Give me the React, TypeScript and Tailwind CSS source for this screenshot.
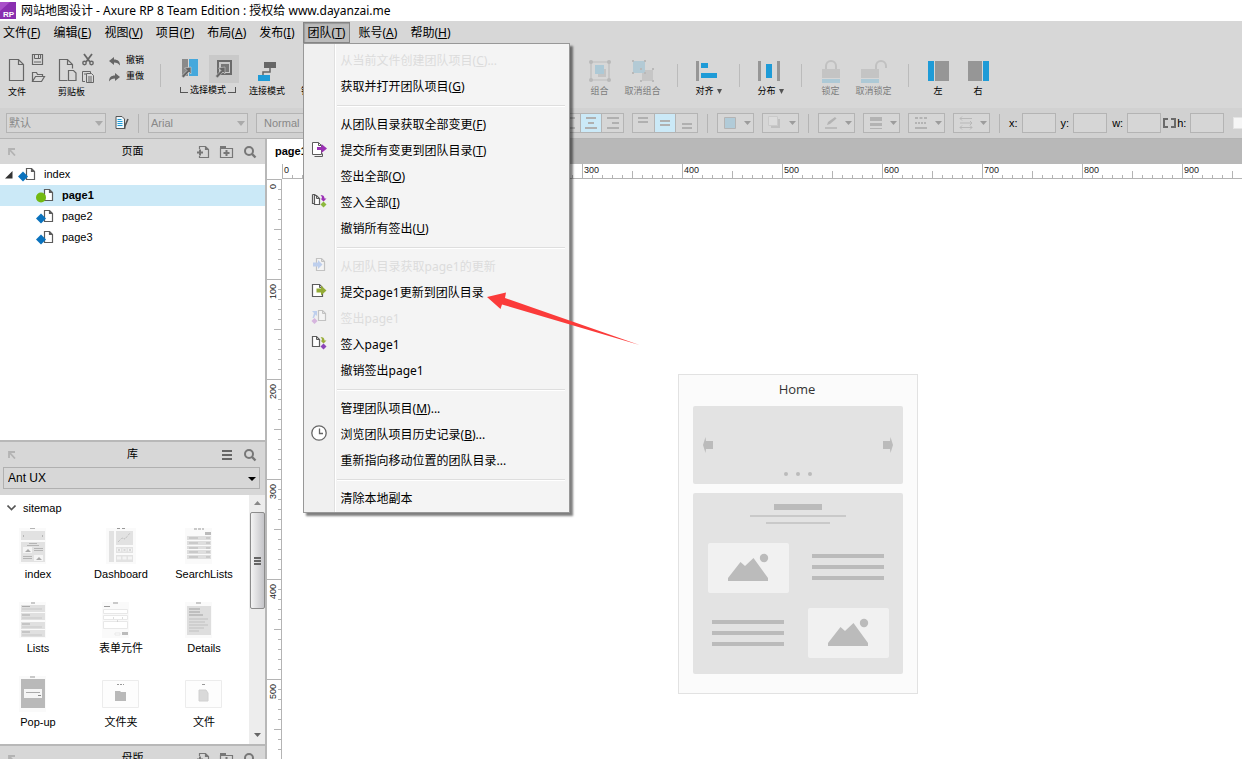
import React, { useEffect, useState } from "react";

type Kids = { children?: React.ReactNode };

const UI = "font-['Noto_Sans','Noto_Sans_CJK_SC',sans-serif]";
const ARIAL = "font-['Liberation_Sans','Noto_Sans_CJK_SC',sans-serif]";

/* ---------- menu bar ---------- */

function Label({ text, hotkey, tail }: { text: string; hotkey?: string; tail?: string }) {
  return (
    <span className="whitespace-nowrap">
      {text}
      {hotkey && (
        <>
          (<u className="underline-offset-1">{hotkey}</u>)
        </>
      )}
      {tail}
    </span>
  );
}

const menusBefore = [
  ["文件", "F"],
  ["编辑", "E"],
  ["视图", "V"],
  ["项目", "P"],
  ["布局", "A"],
  ["发布", "I"],
];
const menusAfter = [
  ["账号", "A"],
  ["帮助", "H"],
];

type Entry = {
  text: string;
  hotkey?: string;
  tail?: string;
  disabled?: boolean;
  icon?: React.ReactNode;
};

const Page = ({ x, w = 9, h = 13, y = 1 }: { x: number; w?: number; h?: number; y?: number }) => (
  <>
    <path
      d={`M${x + 0.5} ${y + 0.5}h${w - 4}l3 3v${h - 4}h-${w - 1}z`}
      fill="#fff"
      stroke="#5c5c5c"
      strokeWidth="1.2"
    />
    <path d={`M${x + w - 3.5} ${y + 0.5}v3h3`} fill="none" stroke="#5c5c5c" />
  </>
);

const SubmitIcon = ({ color }: { color: string }) => (
  <svg width="16" height="16" viewBox="0 0 16 16">
    <Page x={1} w={11} h={13} />
    <path d="M5.500 5.500h4.500V2.500l5.500 5-5.500 5v-3H5.500z" fill={color} />
  </svg>
);

const SubmitAllIcon = () => (
  <svg width="16" height="16" viewBox="0 0 16 16">
    <path d="M3.500 15.500h8v-3" fill="none" stroke="#5c5c5c" />
    <path d="M1.500 13.500v-12h6l3 3v9z" fill="#fff" stroke="#5c5c5c" />
    <path d="M7.500 1.500v3h3" fill="none" stroke="#5c5c5c" />
    <path d="M6 6h4.500V3l5.500 4.500-5.500 4.500V9H6z" fill="#9b30b5" />
  </svg>
);

const CheckInIcon = ({ all }: { all?: boolean }) => (
  <svg width="16" height="16" viewBox="0 0 16 16">
    {all ? (
      <>
        <path d="M1.500 1.500h3M1.500 1.500v9h2" fill="none" stroke="#5c5c5c" strokeWidth="1.200" />
        <Page x={3} w={6} h={10} y={2} />
      </>
    ) : (
      <Page x={1} w={8} h={11} />
    )}
    <path
      d="M9.500 2c2.500 0 4 1 4 3.500h2l-3 3-3-3h1.500C11 4 10.500 3 9.500 2z"
      fill={all ? "#9b30b5" : "#9aae3a"}
    />
    <path d="M12.500 8.500l3 3-3 3-3-3z" fill={all ? "#8cb83c" : "#8b45b8"} />
  </svg>
);

const FetchIcon = () => (
  <svg width="16" height="16" viewBox="0 0 16 16" opacity="0.300">
    <Page x={5} w={9} h={13} />
    <path d="M2 5.500h5V3l4.500 4.500L7 12V9.500H2z" fill="#4f86e8" />
  </svg>
);

const CheckOutIcon = () => (
  <svg width="16" height="16" viewBox="0 0 16 16" opacity="0.300">
    <Page x={7} w={8} h={11} />
    <path d="M1 2h5v5L4.500 5.500 3 9H1.500L3 4z" fill="#4f86e8" />
    <path d="M3.500 9l3 3-3 3-3-3z" fill="#9b30b5" />
  </svg>
);

const ClockIcon = () => (
  <svg width="16" height="16" viewBox="0 0 16 16">
    <circle cx="8" cy="8" r="7.200" fill="#fff" stroke="#666" strokeWidth="1.300" />
    <path d="M8.500 3.500v5H12" fill="none" stroke="#666" strokeWidth="1.300" />
  </svg>
);

const sections: Entry[][] = [
  [
    { text: "从当前文件创建团队项目", hotkey: "C", tail: "...", disabled: true },
    { text: "获取并打开团队项目", hotkey: "G" },
  ],
  [
    { text: "从团队目录获取全部变更", hotkey: "F" },
    { text: "提交所有变更到团队目录", hotkey: "T", icon: <SubmitAllIcon /> },
    { text: "签出全部", hotkey: "O" },
    { text: "签入全部", hotkey: "I", icon: <CheckInIcon all /> },
    { text: "撤销所有签出", hotkey: "U" },
  ],
  [
    { text: "从团队目录获取page1的更新", disabled: true, icon: <FetchIcon /> },
    { text: "提交page1更新到团队目录", icon: <SubmitIcon color="#93ab35" /> },
    { text: "签出page1", disabled: true, icon: <CheckOutIcon /> },
    { text: "签入page1", icon: <CheckInIcon /> },
    { text: "撤销签出page1" },
  ],
  [
    { text: "管理团队项目", hotkey: "M", tail: "..." },
    { text: "浏览团队项目历史记录", hotkey: "B", tail: "...", icon: <ClockIcon /> },
    { text: "重新指向移动位置的团队目录", tail: "..." },
  ],
  [{ text: "清除本地副本" }],
];

function TeamMenu() {
  return (
    <div className="absolute top-full left-0 z-20 w-[267px] border border-[#989898] bg-[linear-gradient(to_right,#f0f0f0_30px,#e0e0e0_30px,#e0e0e0_31px,#fff_31px,#fff_32px,#f4f4f4_32px)] pt-1 shadow-[3px_3px_2px_rgba(0,0,0,0.5)]">
      {sections.map((section, i) => (
        <React.Fragment key={i}>
          {i > 0 && (
            <div className="flex h-3 items-center pr-1 pl-[33px]">
              <hr className="h-[2px] w-full border-0 border-t border-[#dedede] bg-white" />
            </div>
          )}
          {section.map((e) => (
            <button
              key={e.text}
              disabled={e.disabled}
              className="flex h-[26px] w-full items-center text-left text-black disabled:text-[#dcdcdc]"
            >
              <span className="flex w-[37px] shrink-0 pb-1 pl-[7px]">{e.icon}</span>
              <Label text={e.text} hotkey={e.hotkey} tail={e.tail} />
            </button>
          ))}
        </React.Fragment>
      ))}
      <svg
        className="pointer-events-none absolute top-[248px] left-[183px]"
        width="154"
        height="54"
        viewBox="0 0 154 54"
      >
        <path d="M0 5L19 0.500 18 6 152.500 53 15 12.500 13.500 17z" fill="#fb3b3a" />
      </svg>
    </div>
  );
}

function MenuBar() {
  const item = "h-[21px] border border-transparent px-1";
  return (
    <nav className="-ml-0.5 flex h-[23px] items-start gap-[3px] pt-px pr-2 text-[12px]">
      {menusBefore.map(([t, k]) => (
        <button key={t} className={item}>
          <Label text={t} hotkey={k} />
        </button>
      ))}
      <div className="relative">
        <button className="h-[21px] border border-[#858585] bg-[#bcbcbc] px-1 shadow-[inset_1px_1px_1px_#999]">
          <Label text="团队" hotkey="T" />
        </button>
        <TeamMenu />
      </div>
      {menusAfter.map(([t, k]) => (
        <button key={t} className={item}>
          <Label text={t} hotkey={k} />
        </button>
      ))}
    </nav>
  );
}

/* ---------- toolbar ---------- */

const Sep = () => <div className="mt-5 h-[23px] w-px shrink-0 bg-[#bbb]" />;

function Tool({
  label,
  children,
  off,
  menu,
  w,
}: Kids & { label: string; off?: boolean; menu?: boolean; w: string }) {
  return (
    <button
      disabled={off}
      className={`${w} flex shrink-0 flex-col items-center pt-[14px] text-[9px] leading-[14px] whitespace-nowrap disabled:text-[#7c7c7c]`}
    >
      <span className="flex h-[26px] items-center">{children}</span>
      <span className="flex items-center gap-[3px]">
        {label}
        {menu && (
          <svg width="5" height="5" viewBox="0 0 5 5">
            <path d="M0 0h5L2.500 5z" fill="#555" />
          </svg>
        )}
      </span>
    </button>
  );
}

const G = "#666";

function Toolbar() {
  return (
    <div className="flex h-16 overflow-hidden pl-2">
      <div className="w-[50px] shrink-0 pt-2">
        <svg width="40" height="33" viewBox="0 0 40 33" fill="none" stroke={G}>
          <path d="M1.500 7.500h9l5 5v16h-14zM10.500 7.500v5h5" strokeWidth="1.200" />
          <path d="M24.500 2.500h10v10h-10z" strokeWidth="1.200" />
          <path d="M26.500 2.500v4h6v-4M26 10h7M30.500 3v3" />
          <path d="M24.500 29.500v-9h4l1 2h5v2M24.500 29.500l3-5h9l-3 5z" strokeWidth="1.200" />
        </svg>
        <button className="block text-[9px] leading-[14px]">文件</button>
      </div>
      <div className="w-[51px] shrink-0 pt-2">
        <svg width="40" height="33" viewBox="0 0 40 33" fill="none" stroke={G}>
          <path d="M9.500 28.500h-8v-21h8l5 5v4M9.500 7.500v5h5" strokeWidth="1.200" />
          <path d="M10.500 18.500h5l2.500 2.500v7.500h-7.500z" strokeWidth="1.200" fill="#d7d7d7" />
          <path d="M26 2l6 8M34 2l-6 8" strokeWidth="1.800" />
          <circle cx="26.500" cy="11" r="1.700" strokeWidth="1.400" />
          <circle cx="33.500" cy="11" r="1.700" strokeWidth="1.400" />
          <path d="M27 29.500h-2.500v-10h8v2" />
          <path d="M28.500 21.500h5l2 2v7h-7zM30 25h4M30 27h4M30 29h4M26 22h2" />
        </svg>
        <button className="block text-[9px] leading-[14px]">剪贴板</button>
      </div>
      <div className="flex w-[51px] shrink-0 flex-col pt-[9px] text-[9px]">
        <button className="flex h-4 items-center gap-[6px]">
          <svg width="11" height="9" viewBox="0 0 11 9" fill={G}>
            <path d="M0 4l5-4v2.500c4 0 6 2 6 6C9.500 6.500 8 5.500 5 5.500V8z" />
          </svg>
          撤销
        </button>
        <button className="flex h-4 items-center gap-[6px]">
          <svg width="11" height="9" viewBox="0 0 11 9" fill={G}>
            <path d="M11 4L6 0v2.500c-4 0-6 2-6 6C1.500 6.500 3 5.500 6 5.500V8z" />
          </svg>
          重做
        </button>
      </div>
      <Sep />
      <div className="ml-[19px] w-14 shrink-0 pt-[11px]">
        <div className="flex h-7 items-center">
          <button aria-label="相交选择" className="w-[29px] shrink-0">
            <svg width="20" height="22" viewBox="0 0 20 22">
              <path d="M2 1h6v17H2z" fill="#8a8a8a" />
              <path d="M9 1h9v17H9z" fill="#45a8dc" />
              <path d="M11 9v7l-2-2-5.500 6-2-2L7 12.500 4.500 10z" fill="#666" stroke="#d7d7d7" strokeWidth="0.600" />
            </svg>
          </button>
          <button aria-label="包含选择" className="flex h-7 w-[30px] shrink-0 items-center justify-center bg-[#c9c9c9]">
            <svg width="20" height="22" viewBox="0 0 20 22">
              <path d="M4 3h13v13H4z" fill="none" stroke="#6b6b6b" strokeWidth="2" />
              <path d="M7 6h8v8H7z" fill="#777" />
              <path d="M11 9v7l-2-2-5.500 6-2-2L7 12.500 4.500 10z" fill="#666" stroke="#c9c9c9" strokeWidth="0.600" />
            </svg>
          </button>
        </div>
        <div className="flex items-center justify-between text-[9px] leading-[14px]">
          <span className="h-[6px] w-[8px] border-b border-l border-[#555]" />
          <span className="whitespace-nowrap">选择模式</span>
          <span className="h-[6px] w-[8px] border-r border-b border-[#555]" />
        </div>
      </div>
      <Tool label="连接模式" w="w-[62px]">
        <svg width="20" height="20" viewBox="0 0 20 20">
          <path d="M7 1h12v6H7z" fill="#666" />
          <path d="M13 7v4H6v3" fill="none" stroke="#666" strokeWidth="1.500" />
          <path d="M1 14h12v6H1z" fill="#1e9bd7" />
        </svg>
      </Tool>
      <Tool label="钢笔" w="w-[24px]">
        <span />
      </Tool>
      <div className="w-[256px] shrink-0" />
      <Tool label="组合" off w="w-[43px]">
        <svg width="22" height="22" viewBox="0 0 22 22">
          <path d="M2 2h18v18H2z" fill="none" stroke="#bdbdbd" strokeWidth="1.200" />
          <path d="M9 9h8v8H9z" fill="#c4c4c4" />
          <path d="M6 5h9v9H6z" fill="#adc9d6" />
          <g fill="#b9b9b9">
            <circle cx="2" cy="2" r="2" />
            <circle cx="20" cy="2" r="2" />
            <circle cx="2" cy="20" r="2" />
            <circle cx="20" cy="20" r="2" />
          </g>
        </svg>
      </Tool>
      <Tool label="取消组合" off w="w-[43px]">
        <svg width="22" height="22" viewBox="0 0 22 22">
          <path d="M10 10h11v11H10z" fill="#c6c6c6" />
          <path d="M1 1h12v12H1z" fill="#b3cad5" />
          <path
            d="M0 0h2v2H0zM12 0h2v2h-2zM0 12h2v2H0zM12 12h2v2h-2zM20 8h2v2h-2zM8 20h2v2H8zM20 20h2v2h-2zM8 8h2v2H8z"
            fill="#b9b9b9"
          />
        </svg>
      </Tool>
      <div className="w-[13px] shrink-0" />
      <Sep />
      <Tool label="对齐" menu w="w-[61px]">
        <svg width="26" height="22" viewBox="0 0 26 22">
          <path d="M0 1h3v20H0z" fill="#969696" />
          <path d="M5 3h7v5H5zM5 13h16v5H5z" fill="#1e9bd7" />
        </svg>
      </Tool>
      <Sep />
      <Tool label="分布" menu w="w-[61px]">
        <svg width="26" height="22" viewBox="0 0 26 22">
          <path d="M0 1h3v20H0zM19 1h3v20h-3z" fill="#969696" />
          <path d="M8 4h6v14H8z" fill="#1e9bd7" />
        </svg>
      </Tool>
      <Sep />
      <div className="w-[7px] shrink-0" />
      <Tool label="锁定" off w="w-[43px]">
        <svg width="18" height="24" viewBox="0 0 18 24">
          <path d="M4 10V7a5 5 0 0 1 10 0v3" fill="none" stroke="#c1c1c1" strokeWidth="2" />
          <path d="M0 10h18v9H0z" fill="#c4c4c4" />
          <path d="M0 20h18v4H0z" fill="#adc9d6" />
        </svg>
      </Tool>
      <Tool label="取消锁定" off w="w-[43px]">
        <svg width="26" height="24" viewBox="0 0 26 24">
          <path d="M15 10V7a5 5 0 0 1 10 0v2" fill="none" stroke="#c1c1c1" strokeWidth="2" />
          <path d="M0 10h18v9H0z" fill="#c4c4c4" />
          <path d="M0 20h18v4H0z" fill="#adc9d6" />
        </svg>
      </Tool>
      <div className="w-[13px] shrink-0" />
      <Sep />
      <div className="w-[9px] shrink-0" />
      <Tool label="左" w="w-10">
        <svg width="21" height="20" viewBox="0 0 21 20">
          <path d="M0 0h6v20H0z" fill="#1e9bd7" />
          <path d="M7 0h14v20H7z" fill="#969696" />
        </svg>
      </Tool>
      <Tool label="右" w="w-10">
        <svg width="21" height="20" viewBox="0 0 21 20">
          <path d="M15 0h6v20h-6z" fill="#1e9bd7" />
          <path d="M0 0h14v20H0z" fill="#969696" />
        </svg>
      </Tool>
    </div>
  );
}

/* ---------- format bar ---------- */

const BarSep = () => <div className="mx-[9px] h-[19px] w-px shrink-0 bg-[#b4b4b4]" />;

function FormatSelect({ label, value, pad }: { label: string; value: string; pad: string }) {
  return (
    <div className="relative w-[100px] shrink-0">
      <select
        aria-label={label}
        className={`block h-5 w-full appearance-none border border-[#b4b4b4] bg-[#d6d6d6] ${pad} text-[11px] leading-[18px] text-[#888] outline-none`}
      >
        <option>{value}</option>
      </select>
      <svg className="pointer-events-none absolute top-2 right-[3px]" width="8" height="5" viewBox="0 0 8 5">
        <path d="M0 0h8L4 5z" fill="#aaa" />
      </svg>
    </div>
  );
}

function Drop({ label, children }: Kids & { label: string }) {
  return (
    <button
      aria-label={label}
      className="flex h-5 w-[37px] shrink-0 items-center justify-between border border-[#b4b4b4] bg-[#d6d6d6] pr-[2px] pl-[5px]"
    >
      <svg width="14" height="14" viewBox="0 0 14 14">
        {children}
      </svg>
      <svg width="7" height="4" viewBox="0 0 7 4">
        <path d="M0 0h7L3.500 4z" fill="#9c9c9c" />
      </svg>
    </button>
  );
}

function Trio({ labels, paths }: { labels: string[]; paths: string[] }) {
  return (
    <div className="flex h-5 w-[66px] shrink-0 divide-x divide-[#b4b4b4] border border-[#b4b4b4]">
      {paths.map((d, i) => (
        <button
          key={d}
          aria-label={labels[i]}
          className={`flex flex-1 items-center justify-center ${i === 1 ? "bg-[#cbe9f7]" : "bg-[#d6d6d6]"}`}
        >
          <svg width="12" height="14" viewBox="0 0 12 14">
            <path d={d} stroke="#b0b0b0" strokeWidth="2" />
          </svg>
        </button>
      ))}
    </div>
  );
}

function Coord({ name }: { name: string }) {
  return (
    <label className="flex shrink-0 items-center gap-[4px] text-[11px]">
      {name}:
      <input className="h-5 w-[34px] border border-[#b4b4b4] bg-[#d6d6d6] px-1 outline-none" />
    </label>
  );
}

function FormatBar() {
  return (
    <div className="flex h-[30px] shrink-0 items-center overflow-hidden bg-[#d1d1d1] pl-[6px]">
      <FormatSelect label="样式" value="默认" pad="pl-[2px]" />
      <button aria-label="样式管理" className="ml-[9px] shrink-0">
        <svg width="14" height="14" viewBox="0 0 14 14">
          <path d="M1 .5h6l2.500 2.500v9.500H1z" fill="#eef8fd" stroke="#555" />
          <path d="M2.500 3.500h4M2.500 5.500h5M2.500 7.500h5M2.500 9.500h5" stroke="#1e9bd7" />
          <path d="M13 3l-3 7-.5 3" stroke="#555" strokeWidth="1.600" fill="none" />
        </svg>
      </button>
      <BarSep />
      <FormatSelect label="字体" value="Arial" pad="pl-[2px]" />
      <div className="w-2 shrink-0" />
      <FormatSelect label="字重" value="Normal" pad="pl-[7px]" />
      <div className="w-[202px] shrink-0" />
      <Trio
        labels={["左对齐", "居中", "右对齐"]}
        paths={["M0 2h12M0 7h7M0 12h12", "M1 2h10M3 7h6M0 12h12", "M0 2h12M5 7h7M0 12h12"]}
      />
      <div className="w-2 shrink-0" />
      <Trio
        labels={["顶端对齐", "垂直居中", "底端对齐"]}
        paths={["M1 2h10M1 6h10", "M1 5h10M1 9h10", "M1 8h10M1 12h10"]}
      />
      <BarSep />
      <Drop label="填充">
        <path d="M1.500 1.500h11v11h-11z" fill="#b1cbd8" stroke="#b4b4b4" />
      </Drop>
      <div className="w-2 shrink-0" />
      <Drop label="阴影">
        <path d="M3 3h9v9H3z" fill="#c0c0c0" />
        <path d="M.5 .5h9v9h-9z" fill="#dcdcdc" stroke="#cacaca" />
      </Drop>
      <BarSep />
      <Drop label="线条颜色">
        <path d="M3 9l1-3 7-5 1.500 1.500L6 8z" fill="#b3b3b3" />
        <path d="M1 11h12v2H1z" fill="#bcbcbc" />
      </Drop>
      <div className="w-2 shrink-0" />
      <Drop label="线宽">
        <path d="M1 1h12v4H1zM1 7h12v3H1zM1 12h12v1H1z" fill="#b3b3b3" />
      </Drop>
      <div className="w-2 shrink-0" />
      <Drop label="线型">
        <path d="M1 2h12" stroke="#b3b3b3" strokeWidth="2" strokeDasharray="3 1.500" />
        <path d="M1 7h12" stroke="#b3b3b3" strokeWidth="2" strokeDasharray="2 1" />
        <path d="M1 12h12" stroke="#b3b3b3" strokeWidth="2" />
      </Drop>
      <div className="w-2 shrink-0" />
      <Drop label="箭头">
        <path
          d="M1 2.500h12M1 7h12M1 11.500h12M3 .5l-2 2 2 2M11 5l2 2-2 2M3 9.500l-2 2 2 2M11 9.500l2 2-2 2"
          fill="none"
          stroke="#b8b8b8"
        />
      </Drop>
      <BarSep />
      <Coord name="x" />
      <div className="w-[5px] shrink-0" />
      <Coord name="y" />
      <div className="w-[5px] shrink-0" />
      <Coord name="w" />
      <svg className="ml-[2px] shrink-0" width="13" height="10" viewBox="0 0 13 10">
        <path d="M5 1H1v8h4M8 1h4v8H8" fill="none" stroke="#6a6a6a" strokeWidth="2" />
      </svg>
      <div className="w-px shrink-0" />
      <Coord name="h" />
      <input
        type="checkbox"
        aria-label="隐藏"
        className="ml-[9px] h-3 w-3 shrink-0 appearance-none border border-[#e4e4e4] bg-[#f6f6f6]"
      />
    </div>
  );
}

/* ---------- left panels ---------- */

const DockIcon = () => (
  <svg width="8" height="8" viewBox="0 0 8 8">
    <path d="M1 7V1h6M1 1l6 6.500" fill="none" stroke="#b3b3b3" strokeWidth="1.800" />
  </svg>
);
const SearchIcon = () => (
  <svg width="14" height="14" viewBox="0 0 14 14">
    <circle cx="6" cy="6" r="4" fill="none" stroke="#777" strokeWidth="2" />
    <path d="M9 9l3.500 3.500" stroke="#777" strokeWidth="2.400" />
  </svg>
);
const AddPageIcon = () => (
  <svg width="14" height="14" viewBox="0 0 14 14" fill="none" stroke="#777">
    <path d="M3.500 4V1.500h6l3 3v8h-9V11M9.500 1.500v3h3" strokeWidth="1.200" />
    <path d="M1 7.500h6M4 4.500v6" strokeWidth="2" />
  </svg>
);
const AddFolderIcon = () => (
  <svg width="15" height="14" viewBox="0 0 15 14">
    <path d="M1 1h6v3H1z" fill="#777" />
    <path d="M1.500 3.500h12v9h-12z" fill="none" stroke="#777" strokeWidth="1.200" />
    <path d="M4.500 8h6M7.500 5v6" stroke="#777" strokeWidth="2" />
  </svg>
);

function PanelHeader({ title, children }: Kids & { title: string }) {
  return (
    <header className="grid h-[25px] grid-cols-[1fr_auto_1fr] items-center bg-[#d7d7d7] px-2 text-[11px]">
      <button aria-label="停靠" className="justify-self-start">
        <DockIcon />
      </button>
      <h2>{title}</h2>
      <div className="flex items-center gap-[9px] justify-self-end">{children}</div>
    </header>
  );
}

function TreeRow({ name, current, root }: { name: string; current?: boolean; root?: boolean }) {
  return (
    <li>
      <button
        className={`flex h-[21px] w-full items-center text-[11px] ${current ? "bg-[#cbe9f7] font-bold" : ""} ${root ? "pl-[5px]" : "pl-[36px]"}`}
      >
        {root && (
          <svg className="mr-[5px]" width="8" height="8" viewBox="0 0 8 8">
            <path d="M7.500 0v7.500H0z" fill="#333" />
          </svg>
        )}
        <svg className="mr-2" width="18" height="14" viewBox="0 0 18 14">
          <path d="M8.500 .5h5l3 3v8h-8zM13.500 .5v3h3" fill="#fff" stroke="#5c5c5c" strokeWidth="1.200" />
          {current ? (
            <circle cx="5" cy="8.500" r="5" fill="#72b911" />
          ) : (
            <path d="M5 3.500l5 5-5 5-5-5z" fill="#0a72bd" />
          )}
        </svg>
        {name}
      </button>
    </li>
  );
}

const widgets: { name: string; art: React.ReactNode }[] = [
  {
    name: "index",
    art: (
      <>
        <path d="M0 1h27v36H0z" fill="#fafafa" />
        <path d="M2 4h24v9H2zM2 15h24v20H2z" fill="#e2e2e2" />
        <path
          d="M11 1h5v1h-5zM10 16h8v1h-8zM4 8h1v2H4zM23 8h1v2h-1zM8 18h12v1H8zM15 21h9v1h-9zM15 23h9v1h-9zM4 29h9v1H4zM4 31h9v1H4z"
          fill="#b5b5b5"
        />
        <path d="M4 20h9v6H4zM15 28h9v6h-9z" fill="#f5f5f5" />
        <path d="M6 25l3-3 3 3zM17 33l3-3 3 3z" fill="#aaa" />
      </>
    ),
  },
  {
    name: "Dashboard",
    art: (
      <>
        <path d="M4 1h30v36H4z" fill="#fafafa" />
        <path d="M7 4h5v31H7zM14 4h17v14H14zM14 20h17v6H14zM14 28h17v7H14z" fill="#e2e2e2" />
        <path d="M16 15l4-4 3 1 5-6" fill="none" stroke="#b5b5b5" strokeDasharray="1 1" />
        <path d="M15 1h3v1h-3zM20 1h3v1h-3z" fill="#999" />
        <path d="M15 23h15M15 31h15" stroke="#f4f4f4" strokeWidth="3" strokeDasharray="4 1.500" />
        <path d="M16 23h14" stroke="#bbb" strokeDasharray="2 3.500" />
      </>
    ),
  },
  {
    name: "SearchLists",
    art: (
      <>
        <path d="M0 1h27v36H0z" fill="#fafafa" />
        <path d="M9 2h10" stroke="#999" strokeDasharray="3 1" />
        <path d="M20 5h6v3h-6z" fill="#bbb" />
        <path d="M2 9h24v4H2zM2 14h24v4H2zM2 19h24v3H2zM2 23h24v4H2zM2 28h24v4H2z" fill="#dedede" />
        <path d="M4 11h9M21 11h4M4 16h9M21 16h4M4 21h9M21 21h4M4 25h9M21 25h4M4 30h9M21 30h4" stroke="#b5b5b5" />
      </>
    ),
  },
  {
    name: "Lists",
    art: (
      <>
        <path d="M0 1h27v36H0z" fill="#fafafa" />
        <path d="M12 2h4" stroke="#999" />
        <path d="M2 4h24v7H2zM2 12h24v7H2zM2 21h24v7H2zM2 29h24v7H2z" fill="#e0e0e0" />
        <path d="M3 5.500h8M3 14h8M3 23h8M3 31h8" stroke="#aaa" />
        <path d="M3 8h20M3 17h20M3 26h20M3 34h20" stroke="#c8c8c8" />
      </>
    ),
  },
  {
    name: "表单元件",
    art: (
      <>
        <path d="M0 1h27v36H0z" fill="#fafafa" />
        <path d="M11 2h5M2 5.500h6" stroke="#999" />
        <path
          d="M1.500 8.500h24v4h-24zM1.500 14.500h24v4h-24zM1.500 20.500h24v7h-24zM13 32h5v2h-5z"
          fill="#fff"
          stroke="#e8e8e8"
        />
        <path d="M11 17h1M15 20h1M20 17h1" stroke="#bbb" />
        <path d="M20 31h6v3h-6z" fill="#bbb" />
      </>
    ),
  },
  {
    name: "Details",
    art: (
      <>
        <path d="M0 1h27v36H0z" fill="#fafafa" />
        <path d="M11 2h5" stroke="#999" />
        <path d="M2 5h24v29H2z" fill="#dedede" />
        <path d="M4 8h11M4 11h11M4 14h14" stroke="#a0a0a0" />
        <path d="M4 18h19M4 21h16M4 24h19M4 27h15M4 30h10" stroke="#c0c0c0" />
      </>
    ),
  },
  {
    name: "Pop-up",
    art: (
      <>
        <path d="M0 1h27v36H0z" fill="#fafafa" />
        <path d="M11 2h5" stroke="#999" />
        <path d="M2 4h24v29H2z" fill="#b9b9b9" />
        <path d="M5 14h18v9H5z" fill="#f5f5f5" />
        <path d="M7 17.500h14" stroke="#aaa" />
        <path d="M19 20.500h3" stroke="#888" />
      </>
    ),
  },
  {
    name: "文件夹",
    art: (
      <>
        <path d="M.5 5.500h36v27H.5z" fill="#fdfdfd" stroke="#ececec" />
        <path d="M15 9.500h7" stroke="#999" strokeDasharray="2 1" />
        <path d="M13 16h5l1 1h5v9H13z" fill="#b9b9b9" />
      </>
    ),
  },
  {
    name: "文件",
    art: (
      <>
        <path d="M.5 5.500h36v27H.5z" fill="#fdfdfd" stroke="#ececec" />
        <path d="M17 9.500h3" stroke="#999" />
        <path d="M14 15h7l2 3v8h-9z" fill="#d9d9d9" stroke="#d0d0d0" />
      </>
    ),
  },
];

function Sidebar() {
  return (
    <aside className="flex w-[267px] shrink-0 flex-col border-r-2 border-[#b8b8b8] bg-white">
      <section className="min-h-0 flex-1 overflow-hidden">
        <PanelHeader title="页面">
          <button aria-label="添加页面"><AddPageIcon /></button>
          <button aria-label="添加文件夹"><AddFolderIcon /></button>
          <button aria-label="搜索"><SearchIcon /></button>
        </PanelHeader>
        <ul>
          <TreeRow name="index" root />
          <TreeRow name="page1" current />
          <TreeRow name="page2" />
          <TreeRow name="page3" />
        </ul>
      </section>

      <section className="shrink-0 border-t-2 border-[#b8b8b8]">
        <PanelHeader title="库">
          <button aria-label="库菜单">
            <svg width="14" height="12" viewBox="0 0 14 12">
              <path d="M2 2h10M2 6h10M2 10h10" stroke="#666" strokeWidth="2" />
            </svg>
          </button>
          <button aria-label="搜索元件"><SearchIcon /></button>
        </PanelHeader>
        <div className="bg-[#d7d7d7] pr-[5px] pb-[6px] pl-[3px]">
          <div className="relative">
            <select
              aria-label="元件库"
              className="block h-[22px] w-full appearance-none border border-[#b0b0b0] bg-[#d7d7d7] pl-1 text-[12px] outline-none"
            >
              <option>Ant UX</option>
            </select>
            <svg className="pointer-events-none absolute top-[10px] right-1" width="8" height="4" viewBox="0 0 8 4">
              <path d="M0 0h8L4 4z" />
            </svg>
          </div>
        </div>
        <div className="flex">
          <div className="min-w-0 flex-1">
            <button className="mb-[6px] flex h-[26px] items-center gap-[7px] pl-[7px] text-[11px]">
              <svg width="9" height="6" viewBox="0 0 9 6">
                <path d="M.5 .5l4 4 4-4" fill="none" stroke="#555" strokeWidth="1.600" />
              </svg>
              sitemap
            </button>
            <ul className="grid grid-cols-[76px_76px_76px] gap-x-[7px] gap-y-[5px]">
              {widgets.map((w) => (
                <li key={w.name} className="flex h-[69px] flex-col items-center text-[11px] leading-[20px]">
                  <svg width="38" height="37" viewBox="0 0 38 37">
                    {w.art}
                  </svg>
                  <span className="whitespace-nowrap">{w.name}</span>
                </li>
              ))}
            </ul>
          </div>
          <div className="flex w-4 flex-col items-center bg-[#ededed]">
            <svg className="h-[17px]" width="7" height="17" viewBox="0 0 7 17">
              <path d="M0 10h7L3.500 6z" fill="#888" />
            </svg>
            <div className="flex h-[97px] w-[15px] flex-col items-center justify-center gap-px rounded-xs border border-[#8c8c8c] bg-linear-to-r from-[#f4f4f4] to-[#c4c4c8]">
              <span className="h-[2px] w-[7px] bg-[#666]" />
              <span className="h-[2px] w-[7px] bg-[#666]" />
              <span className="h-[2px] w-[7px] bg-[#666]" />
            </div>
            <svg className="mt-auto" width="7" height="17" viewBox="0 0 7 17">
              <path d="M0 6h7l-3.500 4z" fill="#666" />
            </svg>
          </div>
        </div>
      </section>

      <section className="h-[15px] shrink-0 overflow-hidden border-t-2 border-[#b8b8b8]">
        <PanelHeader title="母版">
          <button aria-label="添加母版"><AddPageIcon /></button>
          <button aria-label="添加母版文件夹"><AddFolderIcon /></button>
          <button aria-label="搜索母版"><SearchIcon /></button>
        </PanelHeader>
      </section>
    </aside>
  );
}

/* ---------- canvas ---------- */

const CANVAS_LEFT = 282;
const CANVAS_TOP = 179;

function useWindowSize() {
  const read = () => ({ width: window.innerWidth, height: window.innerHeight });
  const [size, setSize] = useState(read);
  useEffect(() => {
    const update = () => setSize(read());
    window.addEventListener("resize", update);
    return () => window.removeEventListener("resize", update);
  }, []);
  return size;
}

const ticksUpTo = (length: number) =>
  Array.from({ length: Math.max(0, Math.ceil(length / 10)) }, (_, i) => i * 10);
const reach = (t: number) => (t % 100 === 0 ? 15 : t % 50 === 0 ? 8 : 4);

function HorizontalRuler({ length }: { length: number }) {
  const ticks = ticksUpTo(length);
  return (
    <svg className="block h-[15px] w-full" fontSize="9" fill="#222">
      <path
        d={ticks.map((t) => `M${t + 0.5} 15v-${reach(t)}`).join("") + `M0 14.500h${length}`}
        stroke="#b4b4b4"
      />
      {ticks
        .filter((t) => t % 100 === 0 && t + 25 < length)
        .map((t) => (
          <text key={t} x={t + 2} y="9">
            {t}
          </text>
        ))}
    </svg>
  );
}

function VerticalRuler({ length }: { length: number }) {
  const ticks = ticksUpTo(length);
  return (
    <svg className="block h-full w-[15px] shrink-0" fontSize="9" fill="#222">
      <path
        d={ticks.map((t) => `M15 ${t + 0.5}h-${reach(t)}`).join("") + `M14.500 0v${length}`}
        stroke="#b4b4b4"
      />
      {ticks
        .filter((t) => t % 100 === 0 && t + 25 < length)
        .map((t) => (
          <text key={t} transform={`translate(9 ${t + 5}) rotate(-90)`} textAnchor="end">
            {t}
          </text>
        ))}
    </svg>
  );
}

const Photo = ({ x, y }: { x: number; y: number }) => (
  <g transform={`translate(${x} ${y})`}>
    <rect width="81" height="50" rx="2" fill="#f1f1f1" />
    <path d="M20 38v-3l12.500-16 4.500 4 8.500-8L60 35v3z" fill="#bbb" />
    <circle cx="56" cy="15" r="4.200" fill="#bbb" />
  </g>
);

function HomeWireframe() {
  return (
    <svg className="absolute top-[195px] left-[396px]" width="240" height="320" viewBox="0 0 240 320">
      <rect x=".5" y=".5" width="239" height="319" fill="#fbfbfb" stroke="#e2e2e2" />
      <text
        x="119"
        y="20"
        textAnchor="middle"
        fontSize="13"
        fill="#333"
        className="font-['Open_Sans','Noto_Sans',sans-serif]"
      >
        Home
      </text>
      <rect x="15" y="32" width="210" height="78" rx="2" fill="#e3e3e3" />
      <path d="M35 67v8h-7l-.5 4-2.500-8 2.500-8 .5 4zM205 67v8h7l.5 4 2.500-8-2.500-8-.5 4z" fill="#bbb" />
      <g fill="#bbb">
        <circle cx="108" cy="100" r="2" />
        <circle cx="120" cy="100" r="2" />
        <circle cx="132" cy="100" r="2" />
      </g>
      <rect x="15" y="119" width="210" height="181" rx="2" fill="#e3e3e3" />
      <path d="M96 130h48v6H96z" fill="#bbb" />
      <path d="M72 141h96v2H72zM88 148h64v2H88z" fill="#c9c9c9" />
      <Photo x={30} y={169} />
      <Photo x={130} y={234} />
      <path
        d="M134 180h72v4h-72zM134 191h72v4h-72zM134 202h72v4h-72zM34 246h72v4H34zM34 257h72v4H34zM34 268h72v4H34z"
        fill="#bbb"
      />
    </svg>
  );
}

function Workspace() {
  const { width, height } = useWindowSize();
  return (
    <main className="flex min-w-0 flex-1 flex-col">
      <div className="flex h-[25px] shrink-0 bg-[#b8b8b8]">
        <button className="w-24 bg-white pl-2 text-left text-[11px] font-bold">page1</button>
      </div>
      <div className="shrink-0 pl-[15px]">
        <HorizontalRuler length={width - CANVAS_LEFT} />
      </div>
      <div className="flex min-h-0 flex-1">
        <VerticalRuler length={height - CANVAS_TOP} />
        <div className="relative min-w-0 flex-1 overflow-hidden bg-white">
          <HomeWireframe />
        </div>
      </div>
    </main>
  );
}

export default function App() {
  return (
    <div className={`flex h-screen flex-col overflow-hidden bg-white text-black ${ARIAL}`}>
      <header className={`flex h-[21px] shrink-0 items-center gap-[5px] text-[12px] ${UI}`}>
        <svg width="16" height="17" viewBox="0 0 16 17">
          <path d="M0 0h16v17H0z" fill="#8a2fb0" />
          <path d="M0 0h10L0 9z" fill="#a94fc9" />
          <text
            x="3"
            y="15"
            fontSize="8"
            fontWeight="bold"
            fill="#fff"
            className="font-['Liberation_Sans',sans-serif]"
          >
            RP
          </text>
        </svg>
        <h1 className="whitespace-nowrap">网站地图设计 - Axure RP 8 Team Edition : 授权给 www.dayanzai.me</h1>
      </header>
      <div className="shrink-0 bg-[#d7d7d7]">
        <div className={UI}>
          <MenuBar />
        </div>
        <Toolbar />
      </div>
      <FormatBar />
      <div className="h-px shrink-0 bg-[#b4b4b4]" />
      <div className="flex min-h-0 flex-1">
        <Sidebar />
        <Workspace />
      </div>
    </div>
  );
}
